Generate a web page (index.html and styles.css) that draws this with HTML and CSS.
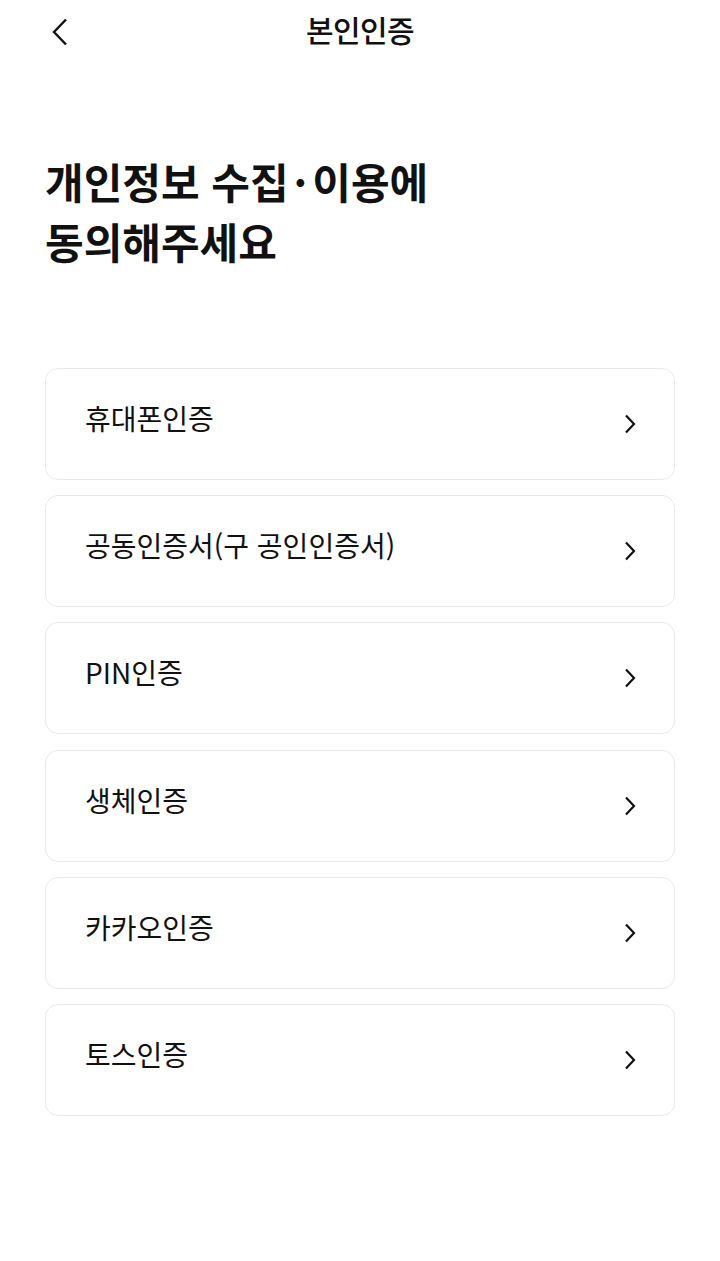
FILE: index.html
```html
<!DOCTYPE html>
<html lang="ko">
<head>
<meta charset="utf-8">
<title>본인인증</title>
<link rel="stylesheet" href="styles.css">
</head>
<body>
<div class="page">
  <header class="topbar">
    <button class="back" aria-label="뒤로">
      <svg width="18" height="28" viewBox="0 0 18 28"><path d="M15 1.5 L3 14 L15 26.5" fill="none" stroke="#111" stroke-width="2.4" stroke-linejoin="miter"/></svg>
    </button>
    <h1 class="title">본인인증</h1>
  </header>
  <h2 class="headline">개인정보 수집<span class="dot">·</span>이용에<br>동의해주세요</h2>
  <ul class="list">
    <li class="item"><span>휴대폰인증</span><svg class="chev" width="12" height="20" viewBox="0 0 12 20"><path d="M2 1.5 L10 10 L2 18.5" fill="none" stroke="#111" stroke-width="2.2"/></svg></li>
    <li class="item"><span>공동인증서(구 공인인증서)</span><svg class="chev" width="12" height="20" viewBox="0 0 12 20"><path d="M2 1.5 L10 10 L2 18.5" fill="none" stroke="#111" stroke-width="2.2"/></svg></li>
    <li class="item"><span>PIN인증</span><svg class="chev" width="12" height="20" viewBox="0 0 12 20"><path d="M2 1.5 L10 10 L2 18.5" fill="none" stroke="#111" stroke-width="2.2"/></svg></li>
    <li class="item"><span>생체인증</span><svg class="chev" width="12" height="20" viewBox="0 0 12 20"><path d="M2 1.5 L10 10 L2 18.5" fill="none" stroke="#111" stroke-width="2.2"/></svg></li>
    <li class="item"><span>카카오인증</span><svg class="chev" width="12" height="20" viewBox="0 0 12 20"><path d="M2 1.5 L10 10 L2 18.5" fill="none" stroke="#111" stroke-width="2.2"/></svg></li>
    <li class="item"><span>토스인증</span><svg class="chev" width="12" height="20" viewBox="0 0 12 20"><path d="M2 1.5 L10 10 L2 18.5" fill="none" stroke="#111" stroke-width="2.2"/></svg></li>
  </ul>
</div>
</body>
</html>
```
FILE: styles.css
```css
* { box-sizing: border-box; }
html, body { margin: 0; padding: 0; background: #fff; }
body {
  font-family: "Noto Sans CJK KR", "Noto Sans", sans-serif;
  color: #111;
}
.page { width: 720px; min-height: 1261px; }
.topbar {
  position: relative;
  height: 62px;
  display: flex;
  align-items: center;
  justify-content: center;
}
.back {
  position: absolute;
  left: 51px;
  top: 18px;
  border: 0;
  background: none;
  padding: 0;
  width: 18px;
  height: 28px;
  display: block;
}
.back svg { display: block; }
.title {
  margin: 0;
  font-size: 30px;
  font-weight: 500;
  line-height: 1;
  letter-spacing: -0.6px;
  position: relative;
  top: -2px;
}
.headline {
  margin: 89px 0 0 45px;
  font-size: 42px;
  font-weight: 700;
  line-height: 60px;
  letter-spacing: 0;
}
.headline .dot { margin: 0 5px; }
.list {
  list-style: none;
  margin: 97px 0 0 45px;
  padding: 0;
  width: 630px;
  display: flex;
  flex-direction: column;
  gap: 15.2px;
}
.item {
  height: 112px;
  border: 1px solid #e9e9e9;
  border-radius: 13px;
  display: flex;
  align-items: center;
  justify-content: space-between;
  padding: 0 38px 0 39px;
  font-size: 28px;
  font-weight: 400;
  letter-spacing: 0;
}
.item span { position: relative; top: -6px; }
.chev { display: block; }
```
